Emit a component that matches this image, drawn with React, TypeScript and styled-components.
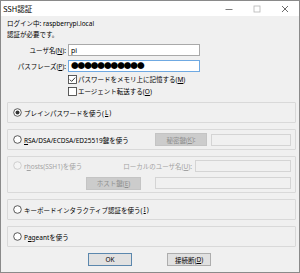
import * as React from "react";
import styled, { createGlobalStyle } from "styled-components";

const GlobalStyle = createGlobalStyle`
  html, body {
    margin: 0;
    padding: 0;
    background: #ffffff;
  }
  body {
    font-family: "Noto Sans", "Noto Sans CJK JP", sans-serif;
  }
`;

const Window = styled.div`
  width: 300px;
  height: 273px;
  box-sizing: border-box;
  border: 1px solid #8a8a8a;
  background: #f0f0f0;
  display: flex;
  flex-direction: column;
  overflow: hidden;
`;

const TitleBar = styled.div`
  height: 15px;
  background: #ffffff;
  display: flex;
  align-items: center;
  padding-left: 2px;
`;

const Title = styled.span`
  font-family: "Noto Sans CJK JP", sans-serif;
  font-size: 7.5px;
  line-height: 15px;
  color: #000;
  flex: 1;
`;

const Caption = styled.div<{ $dim?: boolean }>`
  width: 28px;
  height: 15px;
  display: flex;
  align-items: center;
  justify-content: center;
  color: ${(p) => (p.$dim ? "#b4b4b4" : "#5a5a5a")};
`;

const Body = styled.div`
  flex: 1;
  display: flex;
  flex-direction: column;
  padding: 2px 3px 0 6px;
  font-size: 6.5px;
  color: #000;
`;

const InfoLine = styled.div`
  line-height: 11px;
  height: 11px;
  white-space: nowrap;
`;

const FormRow = styled.div<{ $top: number }>`
  display: flex;
  align-items: center;
  margin-top: ${(p) => p.$top}px;
`;

const FieldLabel = styled.label`
  width: 60px;
  text-align: right;
  padding-right: 2px;
  margin-left: -1px;
  white-space: nowrap;
`;

const TextBox = styled.div<{ $w: number; $focus?: boolean; $off?: boolean }>`
  width: ${(p) => p.$w}px;
  height: 12px;
  box-sizing: border-box;
  border: 1px solid ${(p) => (p.$focus ? "#6fa9e2" : p.$off ? "#d4d4d4" : "#a9a9a9")};
  background: ${(p) => (p.$off ? "#f0f0f0" : "#ffffff")};
  display: flex;
  align-items: center;
  padding-left: 2px;
  font-size: 7px;
  overflow: hidden;
  white-space: nowrap;
`;

const Dots = styled.span`
  font-family: "Noto Sans CJK JP", sans-serif;
  font-size: 7.6px;
  letter-spacing: -1px;
  line-height: 10px;
  color: #000;
`;

const CheckRow = styled.div`
  display: flex;
  align-items: center;
  height: 12px;
  padding-left: 61px;
  gap: 1px;
  white-space: nowrap;
`;

const Group = styled.div<{ $h: number }>`
  height: ${(p) => p.$h}px;
  box-sizing: border-box;
  border: 1px solid #d9d9d9;
  border-radius: 1px;
  margin-top: 6px;
  padding: 0 4px 0 5px;
  display: flex;
  flex-direction: column;
  justify-content: center;
`;

const GroupRow = styled.div<{ $h: number }>`
  display: flex;
  align-items: center;
  height: ${(p) => p.$h}px;
`;

const Choice = styled.span<{ $off?: boolean }>`
  display: flex;
  align-items: center;
  gap: 1px;
  flex: 1;
  white-space: nowrap;
  color: ${(p) => (p.$off ? "#a3a3a3" : "#000")};
`;

const SideLabel = styled.span`
  color: #a3a3a3;
  margin-right: 3px;
  white-space: nowrap;
`;

const GrayButton = styled.div<{ $w: number }>`
  width: ${(p) => p.$w}px;
  height: 13px;
  box-sizing: border-box;
  background: #cccccc;
  border: 1px solid #c4c4c4;
  color: #8e8e8e;
  display: flex;
  align-items: center;
  justify-content: center;
  margin-right: 4px;
  white-space: nowrap;
`;

const ButtonBar = styled.div`
  display: flex;
  justify-content: flex-start;
  gap: 35px;
  margin-top: 6px;
  padding-left: 81px;
`;

const Button = styled.div<{ $primary?: boolean }>`
  width: 44px;
  height: 13px;
  box-sizing: border-box;
  background: #e1e1e1;
  border: 1px solid ${(p) => (p.$primary ? "#5b87ad" : "#adadad")};
  display: flex;
  align-items: center;
  justify-content: center;
  font-size: 6.5px;
  white-space: nowrap;
`;

const Radio: React.FC<{ on?: boolean; off?: boolean }> = ({ on, off }) => (
  <svg width="9" height="9" viewBox="0 0 9 9" style={{ marginRight: 1 }}>
    <circle cx="4.5" cy="4.5" r="3.8" fill={off ? "#f4f4f4" : "#fff"} stroke={off ? "#c6c6c6" : "#333"} strokeWidth="0.8" />
    {on && <circle cx="4.5" cy="4.5" r="2" fill="#333" />}
  </svg>
);

const Check: React.FC<{ on?: boolean }> = ({ on }) => (
  <svg width="9" height="9" viewBox="0 0 9 9">
    <rect x="0.5" y="0.5" width="8" height="8" fill="#fff" stroke="#333" strokeWidth="0.8" />
    {on && <path d="M1.8 4.6 L3.6 6.4 L7.2 2.6" fill="none" stroke="#222" strokeWidth="0.9" />}
  </svg>
);

export default function App() {
  return (
    <>
      <GlobalStyle />
      <Window>
        <TitleBar>
          <Title>SSH認証</Title>
          <Caption>
            <svg width="8" height="8" viewBox="0 0 8 8">
              <line x1="0.5" y1="4.5" x2="7.5" y2="4.5" stroke="currentColor" strokeWidth="0.8" />
            </svg>
          </Caption>
          <Caption $dim>
            <svg width="8" height="8" viewBox="0 0 8 8">
              <rect x="1" y="1" width="6" height="6" fill="none" stroke="currentColor" strokeWidth="0.8" />
            </svg>
          </Caption>
          <Caption>
            <svg width="8" height="8" viewBox="0 0 8 8">
              <path d="M1 1 L7 7 M7 1 L1 7" stroke="currentColor" strokeWidth="0.9" />
            </svg>
          </Caption>
        </TitleBar>
        <Body>
          <InfoLine>ログイン中: raspberrypi.local</InfoLine>
          <InfoLine>認証が必要です。</InfoLine>
          <FormRow $top={4}>
            <FieldLabel>
              ユーザ名(<u>N</u>):
            </FieldLabel>
            <TextBox $w={132}>pi</TextBox>
          </FormRow>
          <FormRow $top={4}>
            <FieldLabel>
              パスフレーズ(<u>P</u>):
            </FieldLabel>
            <TextBox $w={132} $focus>
              <Dots>●●●●●●●●●●●</Dots>
            </TextBox>
          </FormRow>
          <CheckRow style={{ marginTop: 1 }}>
            <Check on />
            <span>
              パスワードをメモリ上に記憶する(<u>M</u>)
            </span>
          </CheckRow>
          <CheckRow>
            <Check />
            <span>
              エージェント転送する(<u>O</u>)
            </span>
          </CheckRow>

          <Group $h={21} style={{ marginTop: 5 }}>
            <GroupRow $h={12}>
              <Choice>
                <Radio on />
                プレインパスワードを使う(<u>L</u>)
              </Choice>
            </GroupRow>
          </Group>

          <Group $h={21}>
            <GroupRow $h={13}>
              <Choice>
                <Radio />
                <span>
                  <u>R</u>SA/DSA/ECDSA/ED25519鍵を使う
                </span>
              </Choice>
              <GrayButton $w={52}>
                秘密鍵(<u>K</u>):
              </GrayButton>
              <TextBox $w={80} $off />
            </GroupRow>
          </Group>

          <Group $h={37}>
            <GroupRow $h={12}>
              <Choice $off>
                <Radio off />
                <span>
                  r<u>h</u>osts(SSH1)を使う
                </span>
              </Choice>
              <SideLabel>
                ローカルのユーザ名(<u>U</u>):
              </SideLabel>
              <TextBox $w={96} $off />
            </GroupRow>
            <GroupRow $h={13} style={{ marginTop: 5, justifyContent: "flex-end" }}>
              <GrayButton $w={55} style={{ marginRight: 14 }}>
                ホスト鍵(<u>E</u>)
              </GrayButton>
              <TextBox $w={136} $off />
            </GroupRow>
          </Group>

          <Group $h={21}>
            <GroupRow $h={12}>
              <Choice>
                <Radio />
                キーボードインタラクティブ認証を使う(<u>I</u>)
              </Choice>
            </GroupRow>
          </Group>

          <Group $h={21}>
            <GroupRow $h={12}>
              <Choice>
                <Radio />
                <span>
                  P<u>a</u>geantを使う
                </span>
              </Choice>
            </GroupRow>
          </Group>

          <ButtonBar>
            <Button $primary>OK</Button>
            <Button>
              接続断(<u>D</u>)
            </Button>
          </ButtonBar>
        </Body>
      </Window>
    </>
  );
}
